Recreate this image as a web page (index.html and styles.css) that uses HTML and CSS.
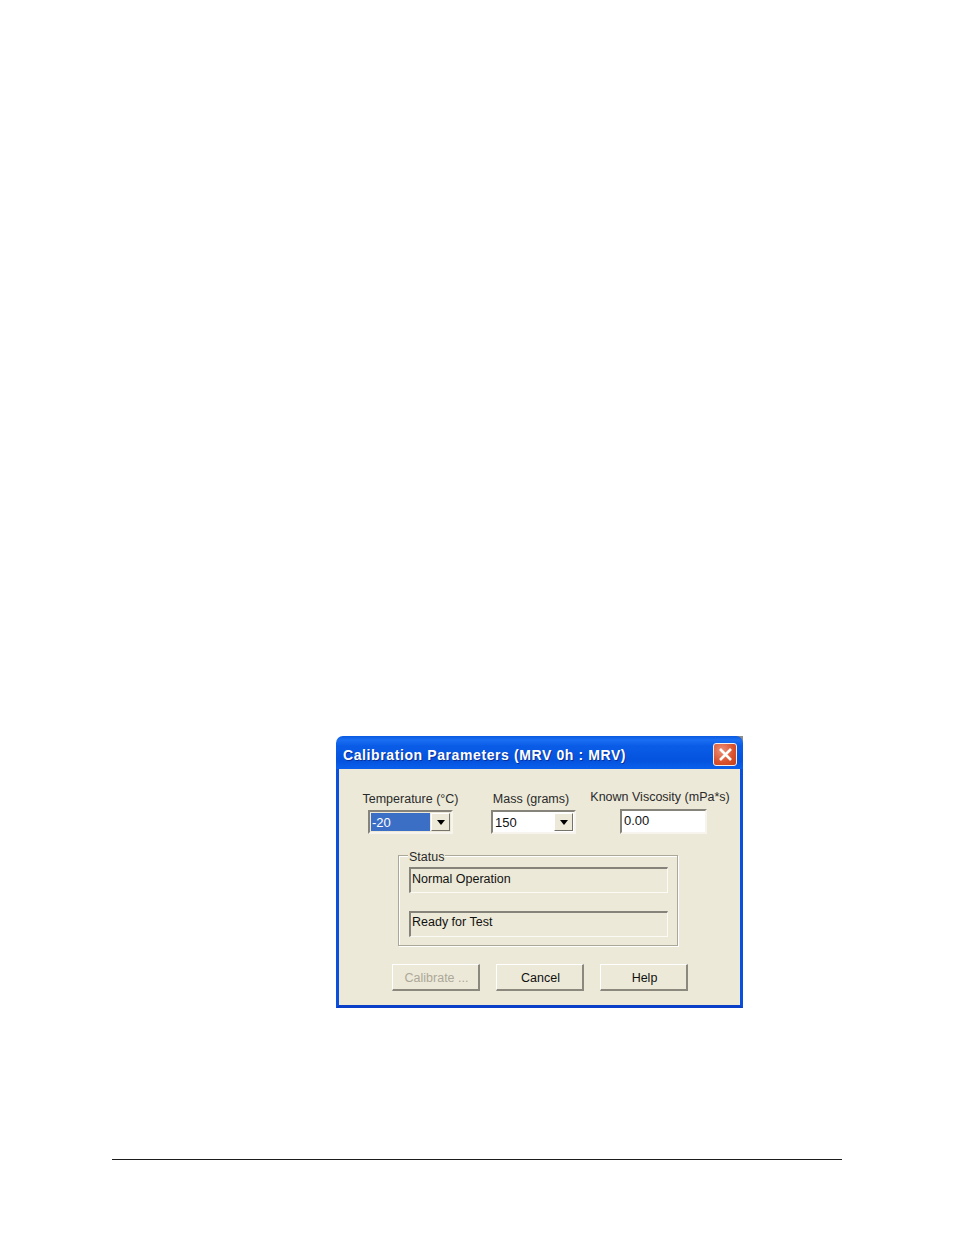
FILE: index.html
```html
<!DOCTYPE html>
<html lang="en">
<head>
    <meta charset="UTF-8">
    <meta name="viewport" content="width=device-width, initial-scale=1.0">
    <title>Calibration Parameters</title>
    <link rel="stylesheet" href="styles.css">
</head>
<body>
<div class="page">
    <div class="dialog">
        <div class="titlebar">
            <span class="title">Calibration Parameters (MRV 0h : MRV)</span>
            <span class="close">
                <svg width="15" height="15" viewBox="0 0 15 15">
                    <path d="M2 2 L13 13 M13 2 L2 13" stroke="#fff" stroke-width="2.6" fill="none"/>
                </svg>
            </span>
        </div>
        <div class="content">
            <div class="fields">
                <div class="field field-temp">
                    <label>Temperature (°C)</label>
                    <div class="combo">
                        <span class="combo-value selected">-20</span>
                        <span class="combo-btn"><i class="arrow"></i></span>
                    </div>
                </div>
                <div class="field field-mass">
                    <label>Mass (grams)</label>
                    <div class="combo">
                        <span class="combo-value">150</span>
                        <span class="combo-btn"><i class="arrow"></i></span>
                    </div>
                </div>
                <div class="field field-visc">
                    <label>Known Viscosity (mPa*s)</label>
                    <div class="textbox">0.00</div>
                </div>
            </div>
            <div class="group">
                <span class="group-label">Status</span>
                <div class="status">Normal Operation</div>
                <div class="status">Ready for Test</div>
            </div>
            <div class="buttons">
                <button disabled>Calibrate ...</button>
                <button>Cancel</button>
                <button>Help</button>
            </div>
        </div>
    </div>
    <div class="footer-rule"></div>
</div>
</body>
</html>
```

FILE: styles.css
```css
body {
    margin: 0;
    background: #fff;
    font-family: 'Liberation Sans', Arial, sans-serif;
}
.page {
    padding-top: 736px;
}
.dialog {
    box-sizing: border-box;
    width: 407px;
    height: 272px;
    margin-left: 336px;
    background: linear-gradient(to left, #8f8f8a 7px, #fff 7px);
    display: flex;
    flex-direction: column;
}
.titlebar {
    height: 33px;
    flex: none;
    box-sizing: border-box;
    display: flex;
    align-items: flex-start;
    justify-content: space-between;
    padding: 7px 6px 0 7px;
    border-radius: 7px 7px 0 0;
    background: linear-gradient(to bottom, #0a5ae0 0%, #1a6ef2 12%, #0a5ce6 30%, #0553de 75%, #0a60ec 100%);
}
.title {
    color: #fff;
    font-size: 14px;
    line-height: 24px;
    font-weight: bold;
    letter-spacing: 0.6px;
    text-shadow: 1px 1px 0 #0a2f9a;
}
.close {
    width: 24px;
    height: 23px;
    box-sizing: border-box;
    border: 1px solid #f4f0ee;
    border-radius: 3px;
    background: radial-gradient(circle at 35% 30%, #ee9078, #d9512c 60%, #c2401f);
    display: flex;
    align-items: center;
    justify-content: center;
}
.content {
    flex: 1;
    border-style: solid;
    border-width: 0 3px 3px;
    border-color: #0a50dc #0a50dc #0a3fc8;
    background: #ece9d8;
    color: #111;
    font-size: 12.5px;
}
.fields {
    display: flex;
    align-items: flex-end;
    height: 65px;
    padding-left: 24px;
}
.field {
    display: flex;
    flex-direction: column;
    align-items: center;
}
.field label {
    line-height: 15px;
    margin-bottom: 3px;
    white-space: nowrap;
    color: #2a2a2a;
}
.field-temp {
    width: 95px;
}
.field-mass {
    width: 85px;
    margin-left: 33px;
}
.field-mass label {
    margin-right: 5px;
}
.field-visc {
    width: 138px;
    margin-left: 15px;
}
.field-visc label {
    margin-bottom: 4px;
}
.combo {
    box-sizing: border-box;
    width: 85px;
    height: 24px;
    display: flex;
    gap: 1px;
    padding: 1px;
    background: #fff;
    border-style: solid;
    border-width: 2px;
    border-color: #85837a #f6f4ec #f6f4ec #85837a;
}
.field-temp .combo {
    background: #ece9d8;
}
.combo-value {
    flex: 1;
    line-height: 19px;
    padding-left: 1px;
    font-size: 13px;
    background: #fff;
}
.combo-value.selected {
    background: #3b6fc6;
    color: #fff;
}
.combo-btn {
    width: 19px;
    flex: none;
    box-sizing: border-box;
    background: #ece9d8;
    border-style: solid;
    border-width: 1px;
    border-color: #fff #75736a #75736a #fff;
    display: flex;
    align-items: center;
    justify-content: center;
}
.arrow {
    width: 0;
    height: 0;
    border-left: 4px solid transparent;
    border-right: 4px solid transparent;
    border-top: 5px solid #000;
}
.textbox {
    box-sizing: border-box;
    width: 87px;
    height: 25px;
    margin-left: 7px;
    padding: 1px 0 0 2px;
    line-height: 17px;
    font-size: 13px;
    background: #fff;
    border-style: solid;
    border-width: 2px;
    border-color: #85837a #f6f4ec #f6f4ec #85837a;
}
.group {
    position: relative;
    box-sizing: border-box;
    width: 280px;
    height: 91px;
    margin: 21px 0 0 59px;
    padding: 11px 0 0 10px;
    border: 1px solid #aca899;
    box-shadow: inset 1px 1px 0 #fff, 1px 1px 0 #fff;
}
.group-label {
    position: absolute;
    top: -6px;
    left: 9px;
    padding: 0 1px;
    line-height: 14px;
    background: #ece9d8;
    color: #2a2a2a;
}
.status {
    box-sizing: border-box;
    width: 259px;
    height: 26px;
    padding-left: 1px;
    line-height: 20px;
    border-style: solid;
    border-width: 2px 1px 1px 2px;
    border-color: #85837a #fbfaf4 #fbfaf4 #85837a;
}
.status + .status {
    margin-top: 18px;
    line-height: 19px;
}
.buttons {
    display: flex;
    gap: 16px;
    margin: 18px 0 0 53px;
}
.buttons button {
    box-sizing: border-box;
    width: 88px;
    height: 27px;
    padding: 1px 0 0 2px;
    font-family: inherit;
    font-size: 12.5px;
    color: #111;
    background: #ece9d8;
    border-style: solid;
    border-width: 1px 2px 2px 1px;
    border-color: #fff #8b897e #8b897e #fff;
}
.buttons button:disabled {
    color: #aca899;
}
.footer-rule {
    height: 1px;
    width: 730px;
    margin: 151px 0 0 112px;
    background: #1c1c1c;
}
```
